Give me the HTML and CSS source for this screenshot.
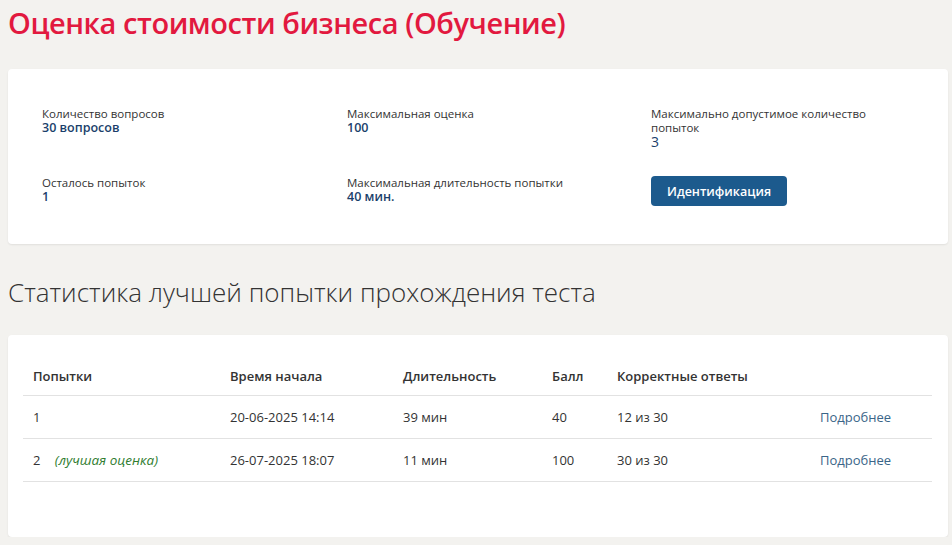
FILE: index.html
```html
<!DOCTYPE html>
<html>
<head>
  <meta charset="utf-8">
  <title>Оценка стоимости бизнеса (Обучение)</title>
  <link rel="stylesheet" href="styles.css">
</head>
<body>
  <h1 class="page-title">Оценка стоимости бизнеса (Обучение)</h1>

  <div class="card info-card">
    <div class="info-grid">
      <div class="info-item">
        <div class="info-label">Количество вопросов</div>
        <div class="info-value">30 вопросов</div>
      </div>
      <div class="info-item">
        <div class="info-label">Максимальная оценка</div>
        <div class="info-value">100</div>
      </div>
      <div class="info-item info-wide">
        <div class="info-label">Максимально допустимое количество попыток</div>
        <div class="info-value plain">3</div>
      </div>
      <div class="info-item">
        <div class="info-label">Осталось попыток</div>
        <div class="info-value">1</div>
      </div>
      <div class="info-item">
        <div class="info-label">Максимальная длительность попытки</div>
        <div class="info-value">40 мин.</div>
      </div>
      <div class="info-item">
        <button class="ident-btn">Идентификация</button>
      </div>
    </div>
  </div>

  <h2 class="section-title">Статистика лучшей попытки прохождения теста</h2>

  <div class="card table-card">
    <table class="attempts">
      <thead>
        <tr>
          <th class="col-num">Попытки</th>
          <th class="col-start">Время начала</th>
          <th class="col-dur">Длительность</th>
          <th class="col-score">Балл</th>
          <th class="col-correct">Корректные ответы</th>
          <th></th>
        </tr>
      </thead>
      <tbody>
        <tr>
          <td>1</td>
          <td>20-06-2025 14:14</td>
          <td>39 мин</td>
          <td>40</td>
          <td>12 из 30</td>
          <td><a href="#" class="more-link">Подробнее</a></td>
        </tr>
        <tr>
          <td>2 <span class="best">(лучшая оценка)</span></td>
          <td>26-07-2025 18:07</td>
          <td>11 мин</td>
          <td>100</td>
          <td>30 из 30</td>
          <td><a href="#" class="more-link">Подробнее</a></td>
        </tr>
      </tbody>
    </table>
  </div>
</body>
</html>
```

FILE: styles.css
```css
body {
  font-family: "Open Sans", "Noto Sans", sans-serif;
  margin: 0;
  padding: 0 4px 0 8px;
  background-color: #f3f2ef;
  color: #333;
}

.page-title {
  margin: 0;
  padding-top: 3px;
  height: 66px;
  font-size: 29px;
  font-weight: 600;
  color: #e2193f;
  letter-spacing: -0.45px;
}

.card {
  background-color: white;
  border-radius: 4px;
  box-shadow: 0 1px 2px rgba(0,0,0,0.08);
}

.info-card {
  padding: 38px 34px;
}

.info-grid {
  display: grid;
  grid-template-columns: 305px 304px 1fr;
  row-gap: 27px;
}

.info-label {
  font-size: 11.5px;
  line-height: 14px;
}

.info-wide .info-label {
  max-width: 225px;
}

.info-value {
  font-size: 12.5px;
  line-height: 14px;
  font-weight: 600;
  color: #1b3f6b;
}

.info-value.plain {
  font-weight: 400;
  font-size: 14px;
}

.ident-btn {
  height: 30px;
  padding: 0 16px;
  border: none;
  border-radius: 4px;
  background-color: #1c5a8d;
  color: white;
  font-family: "Open Sans", "Noto Sans", sans-serif;
  font-size: 12.5px;
  font-weight: 600;
  cursor: pointer;
}

.section-title {
  margin: 0;
  padding-top: 30px;
  height: 61px;
  font-size: 26px;
  font-weight: 300;
  color: #333;
}

.table-card {
  padding: 26px 16px 55px 15px;
}

.attempts {
  width: 100%;
  border-collapse: collapse;
  font-size: 13px;
}

.attempts th {
  text-align: left;
  font-weight: 600;
  padding: 6px 10px 10px;
  border-bottom: 1px solid #e2e2e2;
}

.attempts td {
  height: 42px;
  padding: 0 10px;
  border-bottom: 1px solid #e2e2e2;
}

.col-num { width: 177px; }
.col-start { width: 153px; }
.col-dur { width: 129px; }
.col-score { width: 45px; }
.col-correct { width: 183px; }

.best {
  margin-left: 11px;
  font-size: 13.5px;
  font-style: italic;
  color: #2f7d2f;
}

.more-link {
  color: #3a6588;
  text-decoration: none;
}
```
